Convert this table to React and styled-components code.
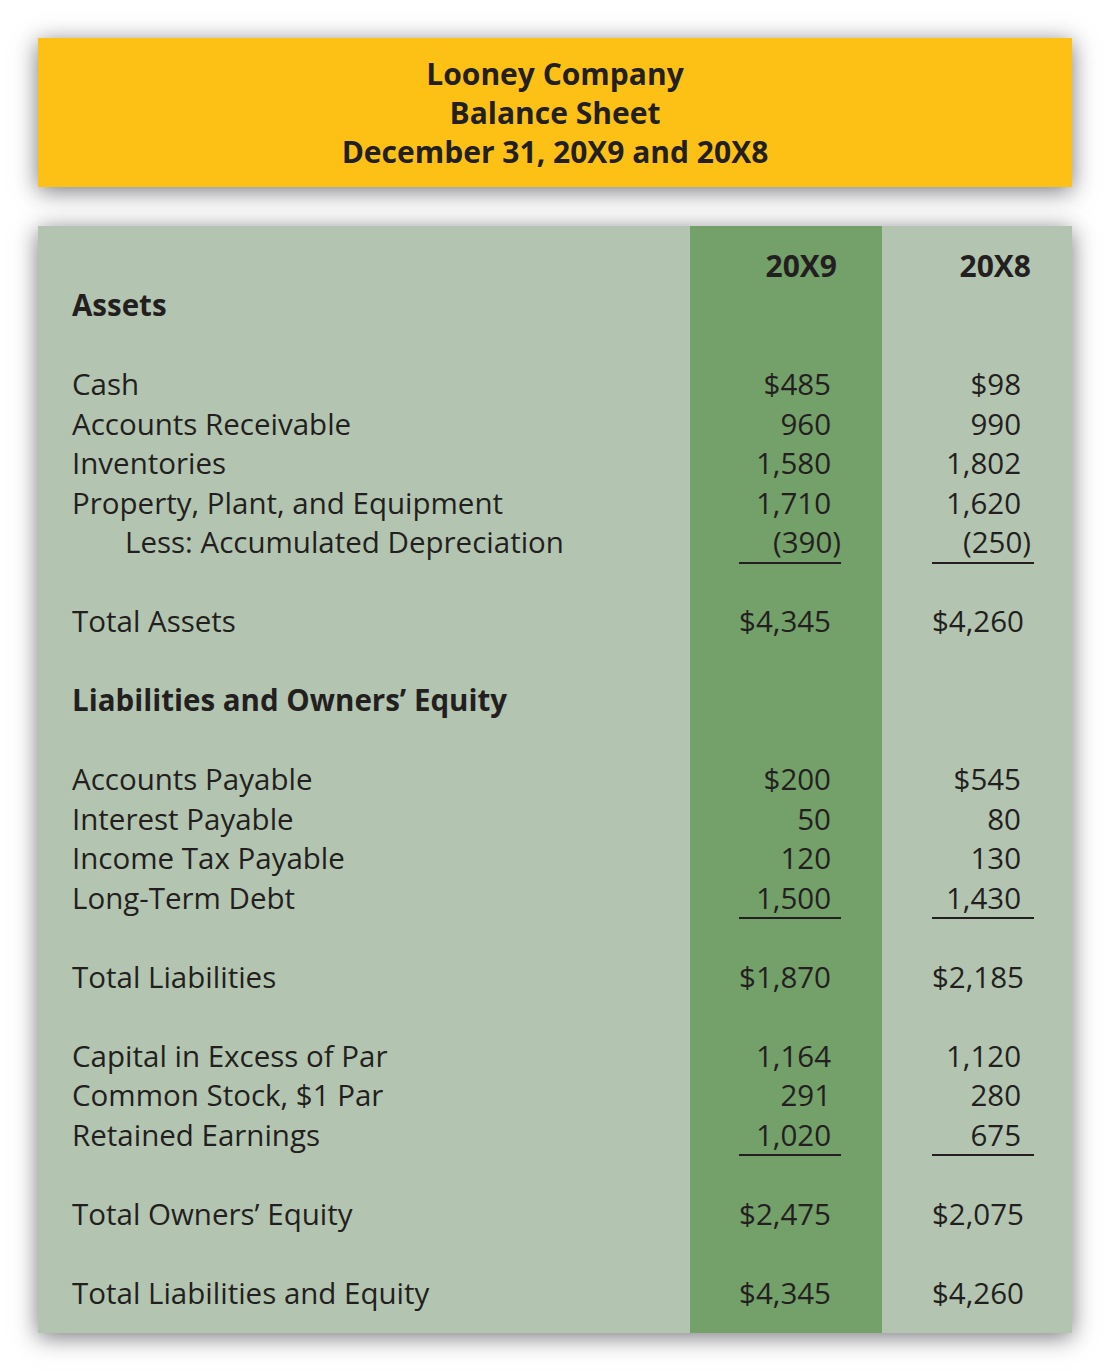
import React from "react";
import styled, { createGlobalStyle } from "styled-components";

const GlobalStyle = createGlobalStyle`
  body {
    margin: 0;
    background: #ffffff;
    font-family: "Open Sans", "Noto Sans", sans-serif;
    color: #231f20;
  }
`;

const Page = styled.div`
  width: 1110px;
  padding: 38px;
  box-sizing: border-box;
  display: flex;
  flex-direction: column;
  gap: 39px;
`;

const TitleBox = styled.div`
  height: 149px;
  background: #fdc116;
  box-shadow: 0 4px 22px rgba(30, 30, 40, 0.6);
  display: flex;
  flex-direction: column;
  justify-content: center;
  align-items: center;
  font-weight: 700;
  font-size: 30px;
  line-height: 39px;
`;

const Panel = styled.div`
  display: grid;
  grid-template-columns: 652px 192px 190px;
  background: #b3c5b1;
  box-shadow: 0 4px 22px rgba(30, 30, 40, 0.6);
`;

const Column = styled.div`
  display: flex;
  flex-direction: column;
  padding: 19.5px 0 21px;
  background: ${(p) => (p.$accent ? "#74a06a" : "transparent")};
`;

const Label = styled.div`
  height: 39.5px;
  line-height: 39.5px;
  padding-left: ${(p) => (p.$indent ? 87 : 34)}px;
  font-size: 29.5px;
  font-weight: ${(p) => (p.$bold ? 700 : 400)};
  white-space: nowrap;
`;

const Value = styled.div`
  height: ${(p) => (p.$rule ? 41.5 : 39.5)}px;
  margin: 0 ${(p) => p.$right}px ${(p) => (p.$rule ? -2 : 0)}px ${(p) => p.$left}px;
  box-sizing: border-box;
  line-height: 39.5px;
  padding-right: ${(p) => p.$pad}px;
  text-align: right;
  font-size: 29.5px;
  border-bottom: 2px solid ${(p) => (p.$rule ? "#231f20" : "transparent")};
  white-space: nowrap;
`;

const Year = styled.div`
  height: 39.5px;
  line-height: 39.5px;
  padding-right: ${(p) => p.$pad}px;
  text-align: right;
  font-size: 30px;
  font-weight: 700;
`;

const Hang = styled.span`
  margin-right: -10px;
`;

const rows = [
  { year: true, v: ["20X9", "20X8"] },
  { label: "Assets", bold: true },
  {},
  { label: "Cash", v: ["$485", "$98"] },
  { label: "Accounts Receivable", v: ["960", "990"] },
  { label: "Inventories", v: ["1,580", "1,802"] },
  { label: "Property, Plant, and Equipment", v: ["1,710", "1,620"] },
  { label: "Less: Accumulated Depreciation", indent: true, v: ["(390)", "(250)"], rule: true },
  {},
  { label: "Total Assets", v: ["$4,345", "$4,260"] },
  {},
  { label: "Liabilities and Owners’ Equity", bold: true },
  {},
  { label: "Accounts Payable", v: ["$200", "$545"] },
  { label: "Interest Payable", v: ["50", "80"] },
  { label: "Income Tax Payable", v: ["120", "130"] },
  { label: "Long-Term Debt", v: ["1,500", "1,430"], rule: true },
  {},
  { label: "Total Liabilities", v: ["$1,870", "$2,185"] },
  {},
  { label: "Capital in Excess of Par", v: ["1,164", "1,120"] },
  { label: "Common Stock, $1 Par", v: ["291", "280"] },
  { label: "Retained Earnings", v: ["1,020", "675"], rule: true },
  {},
  { label: "Total Owners’ Equity", v: ["$2,475", "$2,075"] },
  {},
  { label: "Total Liabilities and Equity", v: ["$4,345", "$4,260"] },
];

// per-column geometry: rule position and where the figures end
const cols = [
  { left: 49, right: 41, pad: 10, yearPad: 45, accent: true },
  { left: 50, right: 38, pad: 13, yearPad: 41, accent: false },
];

const renderFigure = (text) => {
  if (!text) return "\u00a0";
  if (text.endsWith(")"))
    return (
      <>
        {text.slice(0, -1)}
        <Hang>)</Hang>
      </>
    );
  return text;
};

const App = () => {
  return (
    <>
      <GlobalStyle />
      <Page>
        <TitleBox>
          <div>Looney Company</div>
          <div>Balance Sheet</div>
          <div>December 31, 20X9 and 20X8</div>
        </TitleBox>
        <Panel>
          <Column>
            {rows.map((row, i) => (
              <Label key={i} $bold={row.bold} $indent={row.indent}>
                {row.label || "\u00a0"}
              </Label>
            ))}
          </Column>
          {cols.map((col, c) => (
            <Column key={c} $accent={col.accent}>
              {rows.map((row, i) =>
                row.year ? (
                  <Year key={i} $pad={col.yearPad}>
                    {row.v[c]}
                  </Year>
                ) : (
                  <Value
                    key={i}
                    $left={col.left}
                    $right={col.right}
                    $pad={col.pad}
                    $rule={row.rule}
                  >
                    {renderFigure(row.v && row.v[c])}
                  </Value>
                )
              )}
            </Column>
          ))}
        </Panel>
      </Page>
    </>
  );
};

export default App;
